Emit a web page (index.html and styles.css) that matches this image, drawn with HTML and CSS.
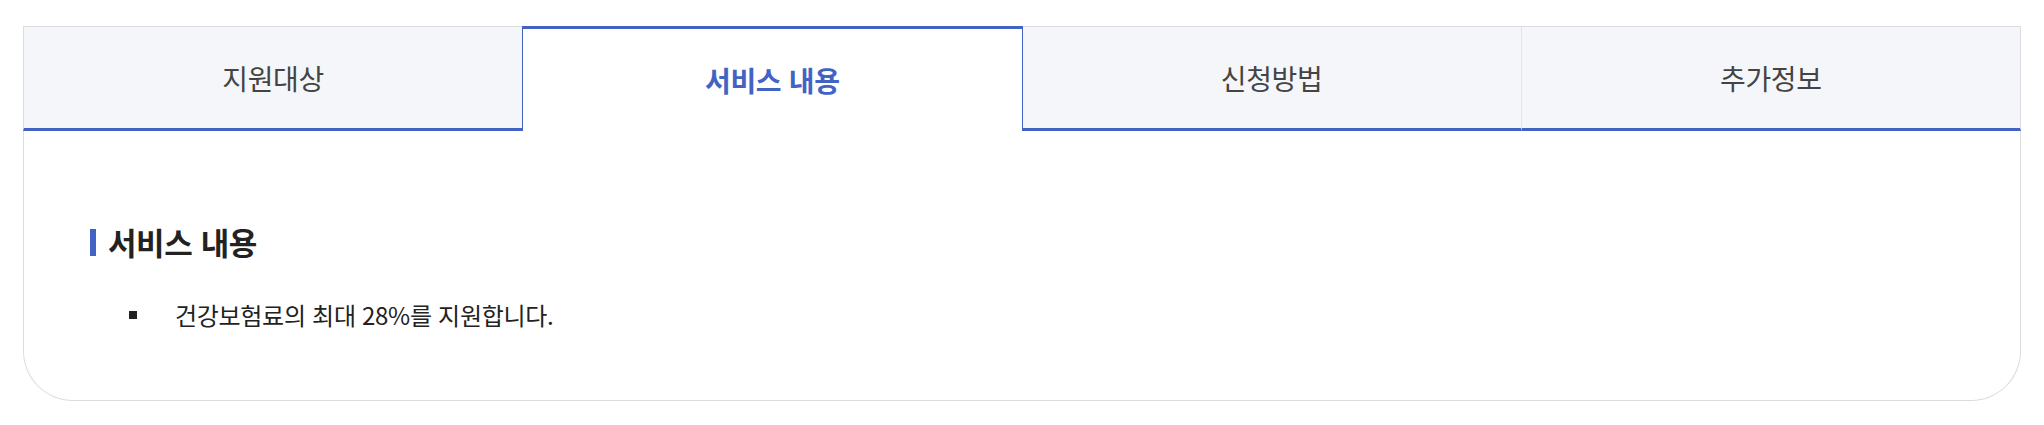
FILE: index.html
```html
<!DOCTYPE html>
<html lang="ko">
<head>
<meta charset="utf-8">
<link rel="stylesheet" href="styles.css">
</head>
<body>
<div class="wrap">
  <div class="tabs">
    <div class="tab first">지원대상</div>
    <div class="tab active">서비스 내용</div>
    <div class="tab">신청방법</div>
    <div class="tab">추가정보</div>
  </div>
  <div class="panel">
    <h3 class="title">서비스 내용</h3>
    <ul class="list">
      <li>건강보험료의 최대 28%를 지원합니다.</li>
    </ul>
  </div>
</div>
</body>
</html>
```
FILE: styles.css
```css
html, body {
  margin: 0;
  padding: 0;
  background: #fff;
}
body {
  font-family: "Noto Sans CJK KR", "Noto Sans", sans-serif;
}
.wrap {
  margin: 26px 23px 0;
}
.tabs {
  display: flex;
}
.tab {
  flex: 1;
  height: 101px;
  box-sizing: content-box;
  display: flex;
  align-items: center;
  justify-content: center;
  background: #f5f6fa;
  border-top: 1px solid #dcdcdc;
  border-right: 1px solid #e2e4e8;
  border-bottom: 3px solid #4263c4;
  font-size: 28px;
  color: #444;
  letter-spacing: -0.3px;
}
.tab.first {
  border-left: 1px solid #dcdcdc;
}
.tab:last-child {
  border-right: 1px solid #dcdcdc;
}
.tab.active {
  background: #fff;
  color: #4263c4;
  font-weight: 700;
  height: 102px;
  border-top: 3px solid #4263c4;
  border-left: 1px solid #4263c4;
  border-right: 1px solid #4263c4;
  border-bottom: 0;
  margin-left: -1px;
}
.panel {
  border: 1px solid #dcdcdc;
  border-top: 0;
  border-radius: 0 0 50px 50px;
  padding: 91px 66px 67px;
}
.title {
  margin: 0;
  display: flex;
  align-items: center;
  gap: 12px;
  font-size: 31px;
  font-weight: 700;
  color: #222;
  letter-spacing: -0.4px;
  line-height: 40px;
}
.title::before {
  content: "";
  width: 6px;
  height: 27px;
  background: #4263c4;
}
.list {
  list-style: none;
  margin: 35px 0 0;
  padding: 0 0 0 39px;
}
.list li {
  display: flex;
  align-items: center;
  gap: 38px;
  font-size: 24px;
  color: #222;
  line-height: 36px;
  letter-spacing: -0.3px;
}
.list li::before {
  content: "";
  width: 8px;
  height: 8px;
  background: #222;
}
```
